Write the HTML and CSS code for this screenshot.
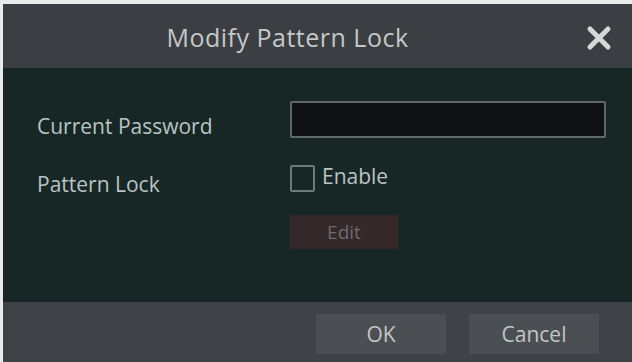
FILE: index.html
```html
<!DOCTYPE html>
<html>
<head>
<meta charset="utf-8">
<link rel="stylesheet" href="styles.css">
</head>
<body>
<div class="dialog">
  <div class="header">
    <div class="title">Modify Pattern Lock</div>
    <button class="close" aria-label="Close">
      <svg width="28" height="28" viewBox="0 0 28 28"><path d="M5 5 L23 23 M23 5 L5 23" stroke="#d6d8d8" stroke-width="5" stroke-linecap="round"/></svg>
    </button>
  </div>
  <div class="body">
    <div class="row row-pw">
      <div class="label">Current Password</div>
      <div class="input"></div>
    </div>
    <div class="row row-lock">
      <div class="label">Pattern Lock</div>
      <label class="check"><span class="box"></span><span class="check-text">Enable</span></label>
    </div>
    <div class="row row-edit">
      <div class="label"></div>
      <div class="edit">Edit</div>
    </div>
  </div>
  <div class="footer">
    <div class="btn">OK</div>
    <div class="btn">Cancel</div>
  </div>
</div>
</body>
</html>
```
FILE: styles.css
```css
html, body { margin: 0; padding: 0; }
body {
  width: 632px; height: 362px; overflow: hidden;
  background: #e9ebeb;
  font-family: "Open Sans", "Noto Sans", sans-serif;
}
.dialog {
  margin: 4px 0 0 3px;
  height: 358px;
  display: flex; flex-direction: column;
  background: #172725;
}
.header {
  height: 64px; flex: none;
  background: #3b3e42;
  display: flex; align-items: center; justify-content: center;
  position: relative;
}
.title {
  color: #c5c7c9; font-size: 25px; letter-spacing: 0.5px;
  margin-left: -60px; margin-top: 2px;
}
.close {
  position: absolute; right: 19px; top: 20px;
  background: none; border: 0; padding: 0; width: 28px; height: 28px;
}
.close svg { display: block; }
.body {
  flex: 1;
  padding: 33px 26px 0 34px;
  display: flex; flex-direction: column;
}
.row { display: flex; align-items: center; }
.label {
  width: 253px; color: #b9c3c3; font-size: 21px;
}
.row-pw { height: 36px; }
.row-pw .label { padding-top: 14px; }
.input {
  width: 312px; height: 33px;
  background: #111215;
  border: 2px solid #5f6868; border-radius: 2px;
}
.row-lock { margin-top: 27px; height: 28px; }
.row-lock .label { padding-top: 12px; }
.check { display: flex; align-items: center; gap: 7px; }
.box {
  width: 21px; height: 23px; border: 2px solid #6f7979; border-radius: 2px;
}
.check-text { color: #b9c3c3; font-size: 21px; margin-top: -5px; }
.row-edit { margin-top: 23px; }
.edit {
  width: 108px; height: 34px;
  background: #35282b;
  color: #6e6c6c; font-size: 19px;
  display: flex; align-items: center; justify-content: center;
}
.footer {
  height: 60px; flex: none;
  background: #3f4347;
  display: flex; align-items: center; justify-content: flex-end;
  gap: 23px; padding-right: 33px;
}
.btn {
  width: 130px; height: 40px;
  background: #4b4f53;
  color: #c3c5c7; font-size: 21px;
  display: flex; align-items: center; justify-content: center;
  margin-top: 4px;
}
```
